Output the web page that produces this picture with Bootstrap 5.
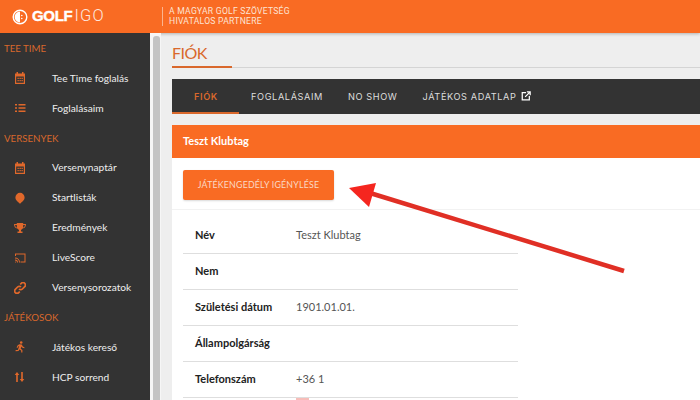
<!DOCTYPE html>
<html lang="hu">

<head>
    <meta charset="UTF-8">
    <meta name="viewport" content="width=device-width, initial-scale=1.0">
    <title>GolfIGO - Fiók</title>
    <link href="https://cdn.jsdelivr.net/npm/bootstrap@5.3.2/dist/css/bootstrap.min.css" rel="stylesheet">
    <style>
        html, body {
            height: 400px;
            overflow: hidden;
        }
        body {
            background-color: #eeeeee;
            font-family: Lato, "Noto Sans", sans-serif;
            position: relative;
        }
        .top-strip {
            height: 33px;
            background-color: #f96b23;
            color: #fff;
            box-shadow: 0 1px 3px rgba(0, 0, 0, .25);
        }
        .logo-box {
            width: 162px;
            padding-left: 12px;
        }
        .logo-text {
            font-family: "Liberation Sans", sans-serif;
            font-size: 15px;
            line-height: 1;
            margin-left: 4px;
        }
        .logo-text b {
            font-weight: 700;
            letter-spacing: -.3px;
            -webkit-text-stroke: .4px #fff;
        }
        .logo-text span {
            font-family: Roboto, sans-serif;
            font-size: 16.5px;
            font-weight: 300;
            letter-spacing: 1.2px;
            margin-left: 2px;
            opacity: .85;
        }
        .partner-text {
            border-left: 1px solid #fbb48f;
            padding-left: 6px;
            font-family: Roboto, sans-serif;
            font-size: 8.6px;
            line-height: 9.5px;
            letter-spacing: .25px;
            color: #fde3d3;
        }
        .main-area {
            height: 367px;
        }
        .side-menu {
            width: 150px;
            background-color: #333333;
            flex: none;
        }
        .side-head {
            height: 29.9px;
            line-height: 30px;
            padding-left: 4px;
            font-size: 9.7px;
            color: #d9682c;
        }
        .side-item {
            height: 29.9px;
            padding-top: 1px;
            color: #eeeeee;
            font-size: 10.2px;
        }
        .side-icon {
            width: 52px;
            padding-left: 14px;
            color: #e0682b;
            flex: none;
        }
        .side-icon svg {
            display: block;
            width: 12px;
            height: 12px;
            fill: currentColor;
        }
        .scroll-gutter {
            width: 11px;
            background-color: #f6f6f6;
            padding: 3px 1px 0 3px;
            flex: none;
        }
        .scroll-thumb {
            width: 7px;
            height: 100%;
            background-color: #c4c4c4;
            border-radius: 3px 3px 0 0;
        }
        .page-body {
            min-width: 0;
            padding-left: 11px;
        }
        .page-title {
            height: 35px;
            margin: 0 0 11px;
            padding-top: 9px;
            border-bottom: 1px solid #d4d4d4;
            font-size: 16px;
            line-height: 22px;
            letter-spacing: -.5px;
            font-weight: 400;
            color: #d9682c;
            position: relative;
        }
        .page-title::after {
            content: "";
            position: absolute;
            left: 0;
            bottom: -1px;
            width: 60px;
            height: 2px;
            background-color: #d9682c;
        }
        .tab-bar {
            height: 35px;
            background-color: #333333;
            font-family: Inter, sans-serif;
            font-size: 9.2px;
            letter-spacing: .6px;
        }
        .tab-link {
            height: 35px;
            padding: 0 12.5px;
            line-height: 35px;
            color: #dddddd;
            text-decoration: none;
            white-space: nowrap;
        }
        .tab-link.tab-on {
            width: 67px;
            padding: 0 0 0 22px;
            margin-right: 12px;
            color: #d9682c;
            font-weight: 600;
            border-bottom: 2px solid #d9682c;
        }
        .tab-link.tab-on + .tab-link {
            padding-left: 0;
        }
        .tab-link svg {
            width: 10px;
            height: 10px;
            vertical-align: -1px;
            margin-left: 1px;
        }
        .acc-card {
            margin-top: 11px;
            border: 0;
            border-radius: 0;
            background-color: #fff;
        }
        .acc-head {
            height: 33px;
            line-height: 31px;
            padding-left: 11px;
            background-color: #f96b23;
            color: #fff;
            font-size: 11px;
            font-weight: 700;
        }
        .acc-btn-wrap {
            padding: 12px 11px 9px;
            border-bottom: 1px solid #f2f2f2;
        }
        .acc-btn {
            width: 151px;
            height: 30px;
            padding: 0;
            background-color: #f96b23;
            border: 0;
            border-radius: 2px;
            color: #fbd9c6;
            font-size: 8.8px;
            letter-spacing: .2px;
            box-shadow: 0 1px 2px rgba(0, 0, 0, .15);
        }
        .acc-rows {
            width: 335px;
            margin: 8px 0 0 11px;
            font-size: 11px;
            color: #555;
        }
        .acc-row {
            height: 36px;
            border-bottom: 1px solid #dedede;
        }
        .acc-label {
            width: 113px;
            padding-left: 12px;
            color: #222;
            font-weight: 700;
        }
        .acc-flag {
            width: 13px;
            height: 3px;
            margin-left: 113px;
            background-color: #f7bdb9;
        }
        .red-arrow {
            position: absolute;
            left: 340px;
            top: 170px;
            width: 300px;
            height: 110px;
        }
    </style>
</head>

<body>
    <header class="top-strip d-flex align-items-center">
        <div class="logo-box d-flex align-items-center">
            <svg width="16" height="16" viewBox="0 0 16 16"><circle cx="8" cy="8" r="6.8" fill="none" stroke="#fff" stroke-width="1.4"/><path d="M8 2.600a5.400 5.400 0 0 0 0 10.800z" fill="#fff"/><circle cx="9.800" cy="6.500" r=".8" fill="#fff"/><circle cx="9.800" cy="9.500" r=".8" fill="#fff"/></svg>
            <div class="logo-text"><b>GOLF</b><span>IGO</span></div>
        </div>
        <div class="partner-text">A MAGYAR GOLF SZÖVETSÉG<br>HIVATALOS PARTNERE</div>
    </header>

    <div class="main-area d-flex">
        <nav class="side-menu">
            <div class="side-head">TEE TIME</div>
            <div class="side-item d-flex align-items-center">
                <div class="side-icon"><svg viewBox="0 0 12 12"><path d="M2.500 0h1.500v1.500h4V0h1.500v1.500H11V12H1V1.500h1.500zM2.200 4.500v6.300h7.600V4.500zM3.500 5.800h1.300v1.300H3.500zm2 0h1.300v1.300H5.500zm2 0h1.300v1.300H7.500zm-4 2.200h1.300v1.300H3.500zm2 0h1.300v1.300H5.500zm2 0h1.300v1.300H7.500z"/></svg></div>
                Tee Time foglalás
            </div>
            <div class="side-item d-flex align-items-center">
                <div class="side-icon"><svg viewBox="0 0 12 12"><path d="M1 2h2v1.600H1zM4.500 2H11.500v1.600H4.500zM1 5.200h2v1.600H1zM4.500 5.200H11.500v1.600H4.500zM1 8.400h2V10H1zM4.500 8.400H11.500V10H4.500z"/></svg></div>
                Foglalásaim
            </div>
            <div class="side-head">VERSENYEK</div>
            <div class="side-item d-flex align-items-center">
                <div class="side-icon"><svg viewBox="0 0 12 12"><path d="M2.500 0h1.500v1.500h4V0h1.500v1.500H11V12H1V1.500h1.500zM2.200 4.500v6.300h7.600V4.500zM3.500 5.800h1.300v1.300H3.500zm2 0h1.300v1.300H5.500zm2 0h1.300v1.300H7.500zm-4 2.200h1.300v1.300H3.500zm2 0h1.300v1.300H5.500zm2 0h1.300v1.300H7.500z"/></svg></div>
                Versenynaptár
            </div>
            <div class="side-item d-flex align-items-center">
                <div class="side-icon"><svg viewBox="0 0 12 12"><path d="M6 .8a4.600 4.600 0 0 1 4.600 4.600c0 2.800-3 4.300-4.200 6.200h-.8C4.400 9.700 1.400 8.200 1.400 5.400A4.600 4.600 0 0 1 6 .8z"/></svg></div>
                Startlisták
            </div>
            <div class="side-item d-flex align-items-center">
                <div class="side-icon"><svg viewBox="0 0 12 12"><path d="M2.800 1h6.400v1H12c0 2.800-1.300 4.200-3.300 4.600-.4.700-1 1.100-1.700 1.300V9.500h1.500V11h-5V9.500H5V7.900c-.7-.2-1.300-.6-1.700-1.300C1.300 6.200 0 4.800 0 2h2.800zM1.100 3c.1 1.400.7 2.300 1.900 2.700-.1-.8-.2-1.700-.2-2.700zM10.900 3H9.200c0 1-.1 1.900-.2 2.700 1.200-.4 1.800-1.300 1.900-2.700z"/></svg></div>
                Eredmények
            </div>
            <div class="side-item d-flex align-items-center">
                <div class="side-icon"><svg viewBox="0 0 12 12"><path d="M1 1.500h10.500v9H6.500v-1h4v-7H2v1.500H1zM1 5.500a5 5 0 0 1 5 5H5a4 4 0 0 0-4-4zm0 2a3 3 0 0 1 3 3H3a2 2 0 0 0-2-2zm0 2a1 1 0 0 1 1 1H1z"/></svg></div>
                LiveScore
            </div>
            <div class="side-item d-flex align-items-center">
                <div class="side-icon"><svg viewBox="0 0 12 12"><path d="M5 7a2.400 2.400 0 0 0 3.400 0l2.300-2.300a2.400 2.400 0 0 0-3.400-3.400L6.200 2.400M7 5a2.400 2.400 0 0 0-3.400 0L1.300 7.300a2.400 2.400 0 0 0 3.400 3.400l1.100-1.100" fill="none" stroke="currentColor" stroke-width="1.700"/></svg></div>
                Versenysorozatok
            </div>
            <div class="side-head">JÁTÉKOSOK</div>
            <div class="side-item d-flex align-items-center">
                <div class="side-icon"><svg viewBox="0 0 12 12"><circle cx="7.200" cy="1.500" r="1.300"/><path d="M5.200 3.300l2.600.3 1 2 1.700.6-.3 1-2.200-.7-.6-.9-.7 2.100 1.700 1.400v2.500H7.200V9.600L5.300 8.400l-.7 1.700-3 .1v-1.100l2.300-.1L5.200 5l-1 .5-.7 1.500-.9-.4.900-2.100z"/></svg></div>
                Játékos kereső
            </div>
            <div class="side-item d-flex align-items-center">
                <div class="side-icon"><svg viewBox="0 0 12 12"><path d="M3 1l2.300 3H3.800v7H2.200V4H.7zM7.200 1h1.600v7h1.500L8 11 5.700 8h1.500z"/></svg></div>
                HCP sorrend
            </div>
        </nav>

        <div class="scroll-gutter"><div class="scroll-thumb"></div></div>

        <main class="page-body flex-grow-1">
            <h1 class="page-title">FIÓK</h1>

            <div class="tab-bar d-flex">
                <a class="tab-link tab-on" href="#">FIÓK</a>
                <a class="tab-link" href="#">FOGLALÁSAIM</a>
                <a class="tab-link" href="#">NO SHOW</a>
                <a class="tab-link" href="#">JÁTÉKOS ADATLAP
                    <svg viewBox="0 0 12 12" fill="none" stroke="#fff" stroke-width="1.500"><path d="M6 2H1.500v8.500H10V6M7 1h4v4M11 1L5 7"/></svg>
                </a>
            </div>

            <div class="card acc-card">
                <div class="acc-head">Teszt Klubtag</div>
                <div class="acc-btn-wrap">
                    <button type="button" class="btn acc-btn">JÁTÉKENGEDÉLY IGÉNYLÉSE</button>
                </div>
                <div class="acc-rows">
                    <div class="acc-row d-flex align-items-center"><div class="acc-label">Név</div><div>Teszt Klubtag</div></div>
                    <div class="acc-row d-flex align-items-center"><div class="acc-label">Nem</div></div>
                    <div class="acc-row d-flex align-items-center"><div class="acc-label">Születési dátum</div><div>1901.01.01.</div></div>
                    <div class="acc-row d-flex align-items-center"><div class="acc-label">Állampolgárság</div></div>
                    <div class="acc-row d-flex align-items-center"><div class="acc-label">Telefonszám</div><div>+36 1</div></div>
                    <div class="acc-flag"></div>
                </div>
            </div>
        </main>
    </div>

    <svg class="red-arrow" viewBox="0 0 300 110">
        <line x1="284" y1="101" x2="30" y2="23" stroke="#e02f25" stroke-width="4.500"/>
        <path d="M9 18L36 13L29 37z" fill="#f5261f"/>
    </svg>

    <script src="https://cdn.jsdelivr.net/npm/bootstrap@5.3.2/dist/js/bootstrap.bundle.min.js"></script>
</body>
</html>
